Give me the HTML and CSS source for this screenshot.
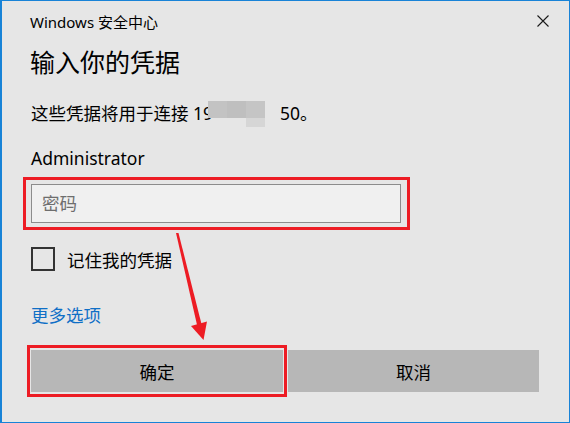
FILE: index.html
```html
<!DOCTYPE html>
<html lang="zh-CN">
<head>
  <meta charset="UTF-8">
  <title>Windows 安全中心</title>
  <link rel="stylesheet" href="styles.css">
</head>
<body>
  <div class="window">
    <div class="titlebar">
      <span class="app-name">Windows 安全中心</span>
      <span class="close">
        <svg width="12" height="12" viewBox="0 0 12 12">
          <path d="M0.5 0.5 L11.5 11.5 M11.5 0.5 L0.5 11.5" stroke="#1a1a1a" stroke-width="1.1" fill="none"/>
        </svg>
      </span>
    </div>

    <h1 class="heading">输入你的凭据</h1>

    <div class="message">
      <span>这些凭据将用于连接 19</span>
      <span class="redact">
        <i class="c1"></i><i class="c2"></i><i class="c3"></i>
        <i class="c0"></i><i class="c0"></i><i class="c4"></i>
      </span>
      <span class="tail">50。</span>
    </div>

    <div class="user">Administrator</div>

    <div class="mark input-mark">
      <div class="password">密码</div>
    </div>

    <label class="remember">
      <span class="checkbox"></span>
      <span>记住我的凭据</span>
    </label>

    <a class="more" href="#">更多选项</a>

    <div class="buttons">
      <div class="mark ok-mark">
        <button class="btn">确定</button>
      </div>
      <button class="btn cancel">取消</button>
    </div>
  </div>

  <svg class="arrow" width="570" height="423" viewBox="0 0 570 423">
    <polygon points="176,233 178.5,233 202,326 197.5,327" fill="#ed1c24"/>
    <polygon points="191,326 207,321.5 203.5,340" fill="#ed1c24"/>
  </svg>
</body>
</html>
```

FILE: styles.css
```css
* {
  margin: 0;
  padding: 0;
  box-sizing: border-box;
}

body {
  position: relative;
  width: 570px;
  height: 423px;
  background: #e6e6e6;
  font-family: "Segoe UI", "Noto Sans", "Noto Sans CJK SC", sans-serif;
  color: #000;
}

.window {
  width: 570px;
  height: 423px;
  background: #e6e6e6;
  border: 1px solid #1883d7;
  border-left-width: 2px;
  padding-left: 28px;
}

.titlebar {
  display: flex;
  align-items: center;
  justify-content: space-between;
  height: 40px;
  padding-right: 20px;
}

.app-name {
  font-size: 15px;
}

.close {
  display: flex;
}

.heading {
  margin-top: 1px;
  font-size: 25px;
  font-weight: normal;
  line-height: 40px;
}

.message {
  display: flex;
  align-items: center;
  height: 24px;
  margin-top: 18px;
  padding-left: 1px;
  font-size: 17.5px;
}

.redact {
  display: grid;
  grid-template-columns: 19px 19px 19px;
  grid-template-rows: 17px 9px;
  align-self: flex-start;
  margin-top: 1px;
  margin-left: -5px;
}

.redact i { display: block; }
.redact .c1 { background: #c3c3c3; }
.redact .c2 { background: #bfbfbf; }
.redact .c3 { background: #c5c5c5; }
.redact .c4 { background: #d6d6d6; }

.tail {
  margin-left: 15px;
}

.user {
  margin-top: 22px;
  padding-left: 1px;
  font-size: 17.5px;
  line-height: 24px;
}

.mark {
  border: 3px solid #ed1c24;
}

.input-mark {
  width: 387px;
  margin-top: 7px;
  margin-left: -7px;
  padding: 4px 6px 4px 5px;
}

.password {
  height: 39px;
  background: #f0f0f0;
  border: 1px solid #8c8c8c;
  padding-left: 10px;
  color: #6e6e6e;
  font-size: 17.5px;
  line-height: 37px;
}

.remember {
  display: flex;
  align-items: center;
  gap: 12px;
  height: 24px;
  margin-top: 17px;
  padding-left: 1px;
  font-size: 17.5px;
}

.checkbox {
  width: 24px;
  height: 24px;
  border: 2px solid #333;
  background: #e6e6e6;
}

.more {
  display: block;
  width: max-content;
  margin-top: 32px;
  padding-left: 1px;
  color: #0f6fc6;
  font-size: 17.5px;
  line-height: 24px;
  text-decoration: none;
}

.buttons {
  display: flex;
  align-items: center;
  margin-top: 18px;
  margin-left: -3px;
}

.ok-mark {
  padding: 2px 1px;
}

.btn {
  display: block;
  width: 252px;
  height: 42px;
  border: none;
  background: #b7b7b7;
  font-family: inherit;
  font-size: 17.5px;
  color: #000;
}

.cancel {
  width: 251px;
  margin-left: 1px;
}

.arrow {
  position: absolute;
  top: 0;
  left: 0;
  pointer-events: none;
}
```
